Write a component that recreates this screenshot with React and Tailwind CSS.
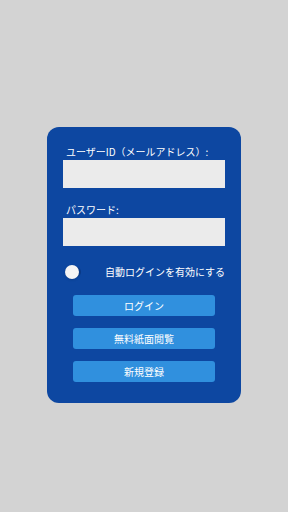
export default function App() {
  const font = { fontFamily: '"Noto Sans CJK JP", "Noto Sans", sans-serif' };
  return (
    <div className="w-[288px] h-[512px] bg-[#d3d3d3] pt-[127px]" style={font}>
      <div className="ml-[47px] w-[194px] h-[276px] bg-[#0d47a1] rounded-[12px] px-[16px] pt-[19px]">
        <div className="text-white text-[10px] leading-[12px] pl-[3px]">ユーザーID（メールアドレス）:</div>
        <div className="mt-[2px] h-[28px] bg-[#ebebeb]" />
        <div className="mt-[16px] text-white text-[10px] leading-[12px] pl-[3px]">パスワード:</div>
        <div className="mt-[2px] h-[28px] bg-[#ebebeb]" />
        <div className="mt-[19px] flex items-center h-[14px]">
          <div className="relative ml-[2px] w-[22px] h-[10px] rounded-full bg-[#0a3b88]">
            <div className="absolute left-0 top-[-2px] w-[14px] h-[14px] rounded-full bg-[#f5f5f5] shadow" />
          </div>
          <div className="ml-[24px] text-white text-[10px] leading-[12px] whitespace-nowrap">自動ログインを有効にする</div>
        </div>
        <div className="mt-[16px] flex flex-col items-center gap-[12px]">
          {['ログイン', '無料紙面閲覧', '新規登録'].map((t) => (
            <div key={t} className="w-[142px] h-[21px] rounded-[3px] bg-[#3090de] text-white text-[10px] flex items-center justify-center">
              {t}
            </div>
          ))}
        </div>
      </div>
    </div>
  );
}
